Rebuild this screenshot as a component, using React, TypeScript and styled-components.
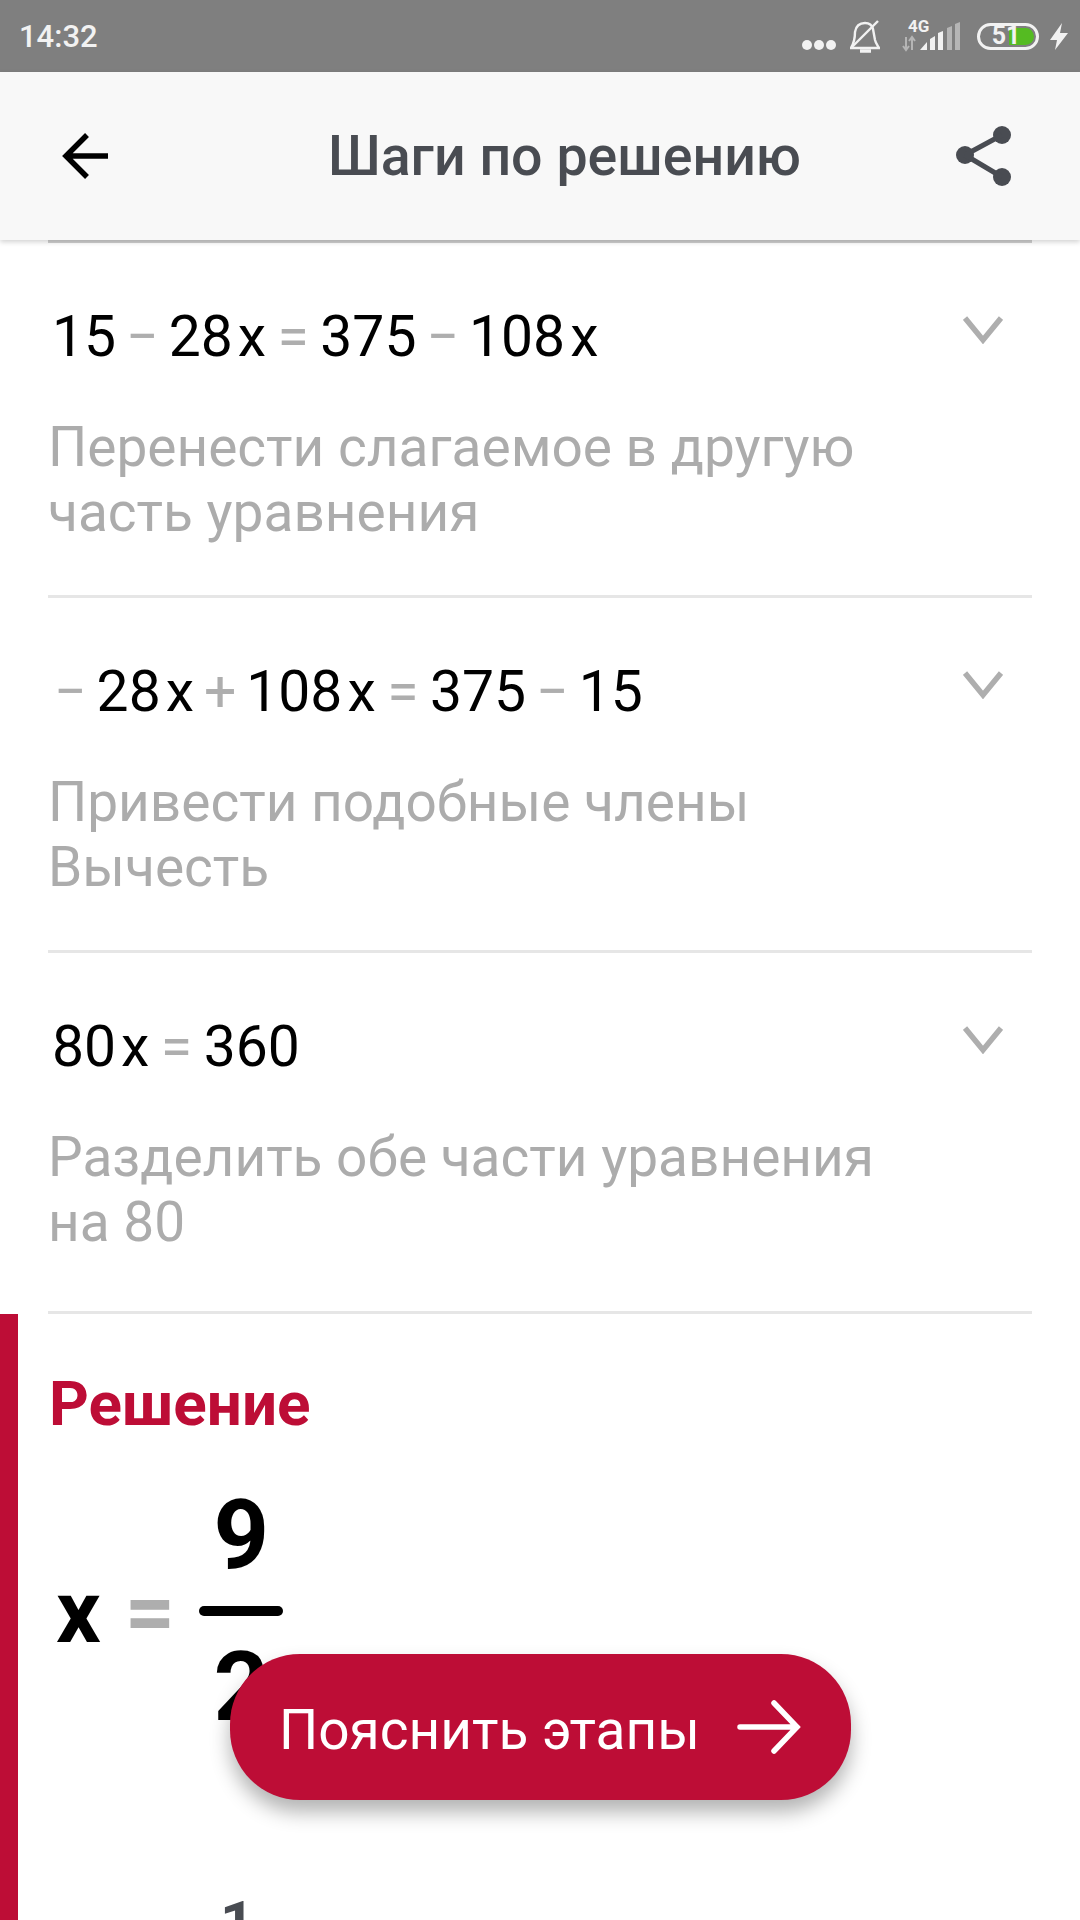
import React from "react";
import styled, { createGlobalStyle } from "styled-components";

const GlobalStyle = createGlobalStyle`
  html, body {
    margin: 0;
    padding: 0;
    background: #fff;
  }
  * {
    box-sizing: border-box;
  }
`;

const Screen = styled.div`
  position: relative;
  width: 1080px;
  height: 1920px;
  overflow: hidden;
  background: #fff;
  font-family: Roboto, "Noto Sans", sans-serif;
`;
const StatusBar = styled.div`
  height: 72px;
  background: #7f7f7f;
  display: flex;
  align-items: center;
  justify-content: space-between;
  padding: 0 12px 0 19px;
  color: #f2f2f2;
`;
const Clock = styled.span`
  font-size: 31px;
  font-weight: 500;
`;
const StatusIcons = styled.div`
  display: flex;
  align-items: center;
`;
const BellIcon = styled.svg`
  margin-left: 13px;
`;
const SignalIcon = styled.svg`
  margin-left: 22px;
`;
const Battery = styled.div`
  position: relative;
  width: 62px;
  height: 27px;
  margin: 0 11px 0 17px;
  border: 3px solid #f2f2f2;
  border-radius: 14px;
  display: flex;
  align-items: center;
  justify-content: center;
  font-size: 25px;
  font-weight: 700;
  overflow: hidden;
`;
const BatteryFill = styled.div`
  position: absolute;
  inset: 0;
  margin: 2px;
  border-radius: 10px;
  background: linear-gradient(90deg, transparent 0 51%, #55bb22 51% 100%);
`;
const BatteryText = styled.span`
  position: relative;
  margin-right: 4px;
  line-height: 22px;
`;
const Header = styled.header`
  position: relative;
  z-index: 2;
  height: 168px;
  background: #f8f8f8;
  display: flex;
  align-items: center;
  justify-content: space-between;
  padding: 0 68px 0 61px;
  box-shadow: 0 2px 5px rgba(0, 0, 0, 0.18);
`;
const Title = styled.h1`
  margin: 0 0 0 64px;
  font-size: 55.5px;
  font-weight: 500;
  color: #494c52;
`;
const Steps = styled.div`
  margin: 0 48px;
  border-top: 3px solid #cfcfcf;
`;
const Step = styled.div<{ $last?: boolean }>`
  position: relative;
  padding: 60px 0 ${(p) => (p.$last ? "56px" : "50px")};
  border-bottom: 3px solid #e6e6e6;
`;
const Equation = styled.div`
  display: flex;
  align-items: center;
  height: 66px;
  padding-left: 4px;
  font-size: 57px;
  color: #000;
`;
const Var = styled.span`
  margin-left: 5px;
`;
const Op = styled.span`
  color: #aeaeae;
  margin: 0 10px;
`;
const LeadOp = styled(Op)`
  margin-left: 2px;
`;
const EqualsOp = styled(Op)`
  margin: 0 11.5px;
`;
const Chevron = styled.svg`
  position: absolute;
  right: 29px;
  top: 73px;
  width: 40px;
  height: 28px;
`;
const Hint = styled.p`
  margin: 46px 0 0;
  width: 840px;
  font-size: 55px;
  line-height: 65px;
  color: #acacac;
`;
const Solution = styled.section`
  min-height: 700px;
  border-left: 18px solid #bd0d36;
  padding: 56px 0 0 31px;
`;
const SolutionTitle = styled.h2`
  margin: 0;
  font-size: 62px;
  font-weight: 700;
  line-height: 68px;
  color: #bd0d36;
`;
const Formula = styled.div`
  display: flex;
  align-items: center;
  margin-top: 41px;
  padding-left: 7px;
  font-size: 88px;
  font-weight: 700;
  color: #000;
`;
const FormulaEquals = styled.span`
  color: #aeaeae;
  margin: 0 24px;
`;
const Fraction = styled.div`
  display: flex;
  flex-direction: column;
  align-items: center;
  width: 84px;
`;
const FractionPart = styled.span`
  font-size: 97px;
  line-height: 112px;
`;
const FractionBar = styled.div`
  align-self: stretch;
  height: 10px;
  margin: 15px 0;
  border-radius: 5px;
  background: #000;
`;
const NextFormula = styled.div`
  margin: 138px 0 0 171px;
  font-size: 60px;
  line-height: 84px;
  font-weight: 700;
  color: #494c52;
`;
const ExplainButton = styled.button`
  position: absolute;
  left: 230px;
  top: 1654px;
  z-index: 3;
  width: 621px;
  height: 146px;
  padding: 0 50px 0 49px;
  border: 0;
  border-radius: 70px;
  background: #bd0d36;
  color: #fff;
  display: flex;
  align-items: center;
  justify-content: space-between;
  font-family: inherit;
  font-size: 55px;
  box-shadow: 0 12px 20px rgba(0, 0, 0, 0.3);
`;
const ButtonLabel = styled.span`
  padding-top: 5px;
`;

const steps = [
  {
    eq: (
      <>
        15<Op>−</Op>28<Var>x</Var><EqualsOp>=</EqualsOp>375<Op>−</Op>108<Var>x</Var>
      </>
    ),
    hint: "Перенести слагаемое в другую часть уравнения",
  },
  {
    eq: (
      <>
        <LeadOp>−</LeadOp>28<Var>x</Var><Op>+</Op>108<Var>x</Var><EqualsOp>=</EqualsOp>375<Op>−</Op>15
      </>
    ),
    hint: (
      <>
        Привести подобные члены
        <br />
        Вычесть
      </>
    ),
  },
  {
    eq: (
      <>
        80<Var>x</Var><EqualsOp>=</EqualsOp>360
      </>
    ),
    hint: "Разделить обе части уравнения на 80",
  },
];

export default function App() {
  return (
    <Screen>
      <GlobalStyle />
      <StatusBar>
        <Clock>14:32</Clock>
        <StatusIcons>
          <svg width="36" height="72" viewBox="0 0 36 72" fill="#f2f2f2">
            <circle cx="6" cy="45" r="5" />
            <circle cx="18" cy="45" r="5" />
            <circle cx="30" cy="45" r="5" />
          </svg>
          <BellIcon width="30" height="72" viewBox="0 0 30 72" fill="none" stroke="#f2f2f2" strokeWidth="2.4">
            <path d="M1 48 C4 43 5 38 5 32 C6 26 10 23 15 23 C19 23 22 25 23 29 L25 40 C26 44 28 46 29 48 Z" />
            <path d="M28 21 L2 47" />
            <path d="M10 51 H21" strokeWidth="3.5" />
          </BellIcon>
          <SignalIcon width="58" height="72" viewBox="0 0 58 72">
            <text x="6" y="32" fontSize="17" fontWeight="700" fill="#f2f2f2" fontFamily="Roboto">4G</text>
            <path d="M4 37 V50 M1 46 L4 50 L7 46 M10 50 V37 M7 41 L10 37 L13 41" fill="none" stroke="#b5b5b5" strokeWidth="2" />
            <path d="M18 50 L25 42 V50 Z M28 39 L33 36 V50 H28 Z M36 33 L41 31 V50 H36 Z" fill="#f2f2f2" />
            <path d="M45 28 L50 26 V50 H45 Z M53 24 L58 22 V50 H53 Z" fill="#b5b5b5" />
          </SignalIcon>
          <Battery>
            <BatteryFill />
            <BatteryText>51</BatteryText>
          </Battery>
          <svg width="18" height="72" viewBox="0 0 18 72" fill="#f2f2f2">
            <path d="M12 23 L0 40 H7 L5 50 L18 33 H10 Z" />
          </svg>
        </StatusIcons>
      </StatusBar>
      <Header>
        <svg width="48" height="48" viewBox="0 0 48 48" fill="none" stroke="#000" strokeWidth="5.5">
          <path d="M47 24 H5 M26 3 L5 24 L26 45" />
        </svg>
        <Title>Шаги по решению</Title>
        <svg width="56" height="60" viewBox="0 0 56 60" fill="#494c52" stroke="#494c52" strokeWidth="0">
          <circle cx="9" cy="29" r="9" />
          <circle cx="46" cy="9" r="9" />
          <circle cx="46" cy="51" r="9" />
          <path d="M9 29 L46 9 M9 29 L46 51" strokeWidth="5" />
        </svg>
      </Header>
      <Steps>
        {steps.map((step, i) => (
          <Step key={i} $last={i === steps.length - 1}>
            <Equation>{step.eq}</Equation>
            <Chevron viewBox="0 0 40 28" fill="none" stroke="#aeaeae" strokeWidth="5.5">
              <path d="M2 2 L20 24 L38 2" />
            </Chevron>
            <Hint>{step.hint}</Hint>
          </Step>
        ))}
      </Steps>
      <Solution>
        <SolutionTitle>Решение</SolutionTitle>
        <Formula>
          x<FormulaEquals>=</FormulaEquals>
          <Fraction>
            <FractionPart>9</FractionPart>
            <FractionBar />
            <FractionPart>2</FractionPart>
          </Fraction>
        </Formula>
        <NextFormula>1</NextFormula>
      </Solution>
      <ExplainButton>
        <ButtonLabel>Пояснить этапы</ButtonLabel>
        <svg width="64" height="56" viewBox="0 0 64 56" fill="none" stroke="#fff" strokeWidth="5.5" strokeLinecap="round">
          <path d="M3 28 H60 M37 4 L60 28 L37 52" />
        </svg>
      </ExplainButton>
    </Screen>
  );
}
